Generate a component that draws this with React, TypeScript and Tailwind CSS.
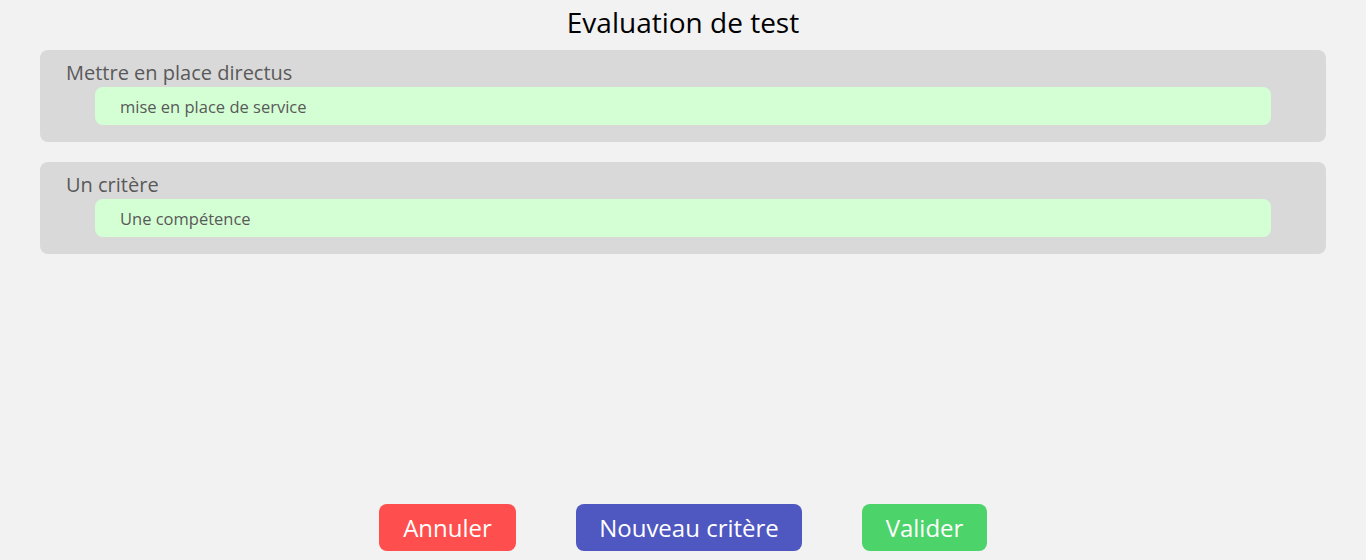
const criteres = [
  { titre: "Mettre en place directus", competences: ["mise en place de service"] },
  { titre: "Un critère", competences: ["Une compétence"] },
];

function CritereCard({ titre, competences }: { titre: string; competences: string[] }) {
  return (
    <div className="mx-10 rounded-lg bg-[#d9d9d9] pt-2 pb-[17px]">
      <div className="pl-[26px] text-[20px] leading-[29px] text-[#595959]">{titre}</div>
      {competences.map((c) => (
        <div
          key={c}
          className="ml-[55px] mr-[55px] h-[38px] flex items-center rounded-lg bg-[#d4ffd4] px-[25px] pt-[2px] text-[16.5px] text-[#595959]"
        >
          {c}
        </div>
      ))}
    </div>
  );
}

export default function App() {
  return (
    <div
      className="h-screen flex flex-col bg-[#f2f2f2]"
      style={{ fontFamily: '"Segoe UI", "Open Sans", "Noto Sans", sans-serif' }}
    >
      <h1 className="h-[44px] flex items-center justify-center text-[28px] text-black">
        Evaluation de test
      </h1>
      <div className="mt-[6px] flex flex-col gap-5">
        {criteres.map((c) => (
          <CritereCard key={c.titre} titre={c.titre} competences={c.competences} />
        ))}
      </div>
      <div className="mt-auto mb-[9px] flex justify-center gap-[60px]">
        <button className="h-[47px] w-[137px] rounded-lg bg-[#ff4e4e] text-[24px] text-white">Annuler</button>
        <button className="h-[47px] w-[226px] rounded-lg bg-[#4f57c1] text-[24px] text-white">Nouveau critère</button>
        <button className="h-[47px] w-[125px] rounded-lg bg-[#4cd36a] text-[24px] text-white">Valider</button>
      </div>
    </div>
  );
}
